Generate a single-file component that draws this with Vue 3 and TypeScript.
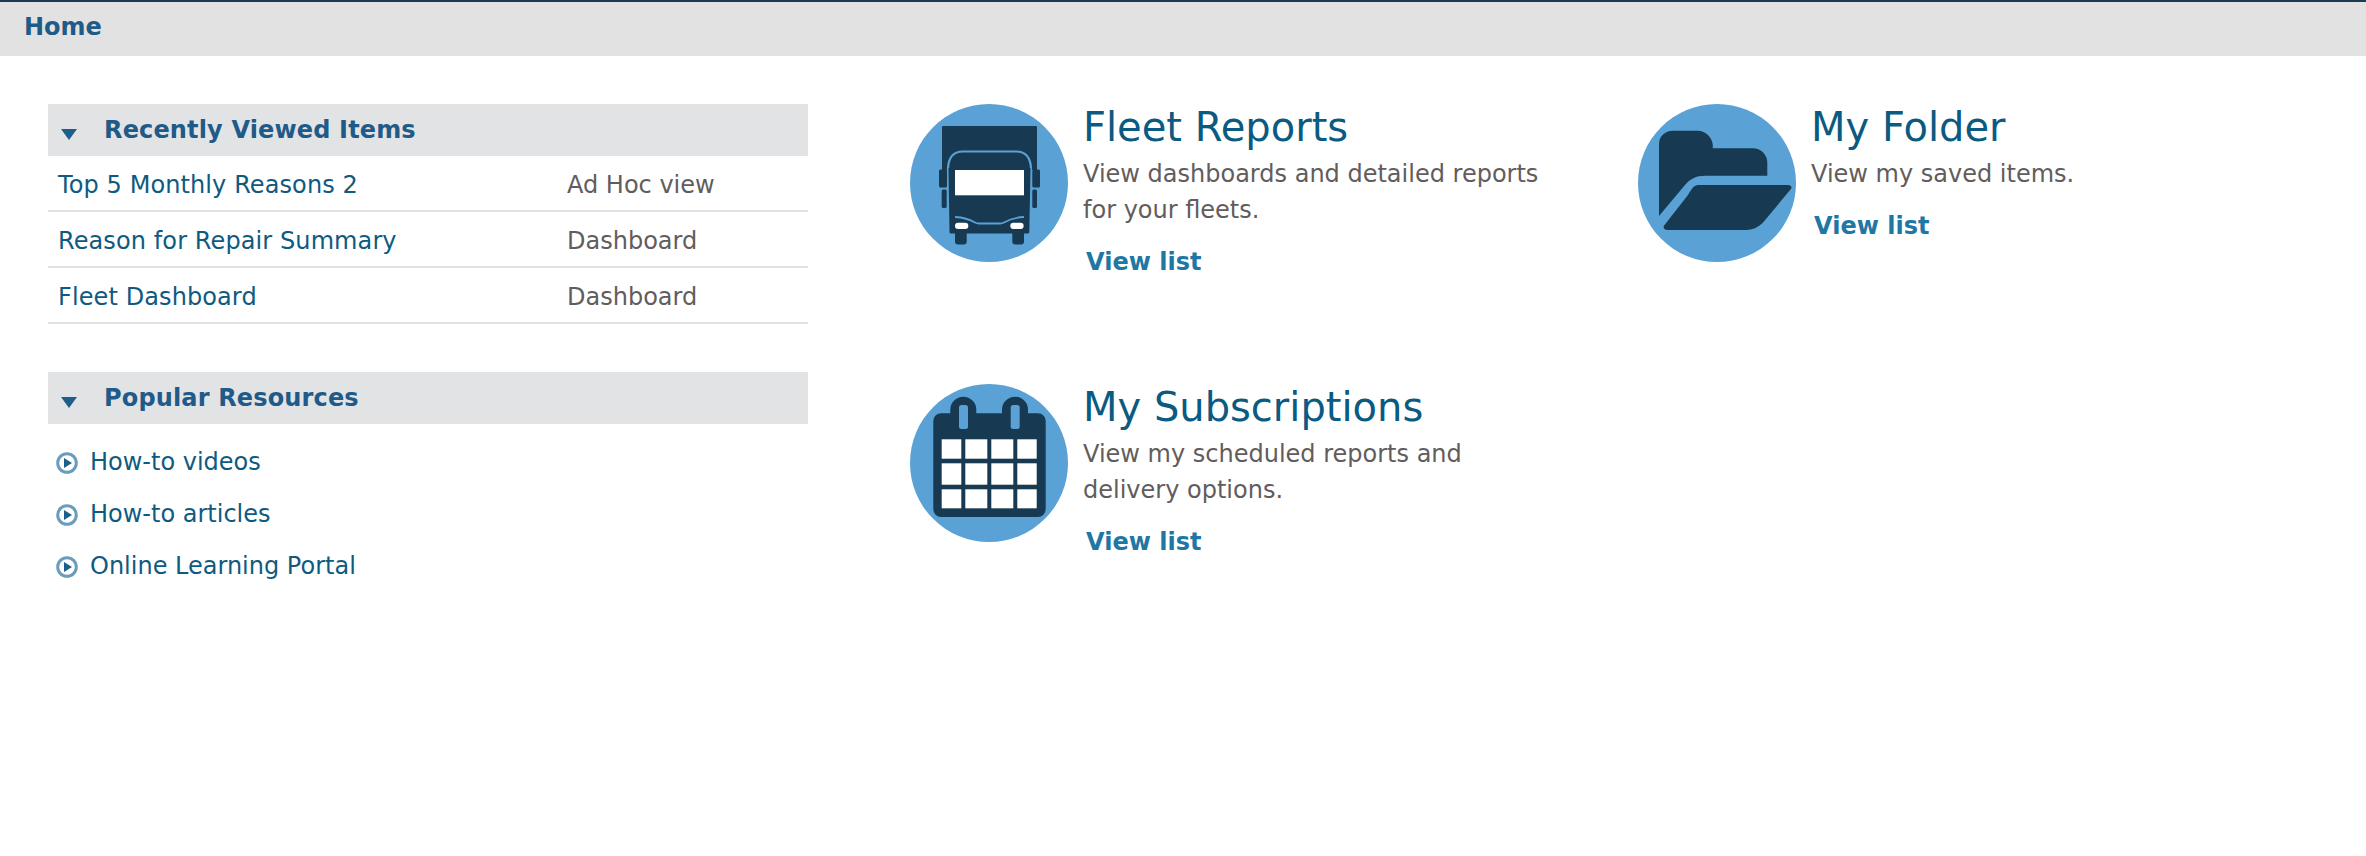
<template>
  <div class="home-page">
    <div class="title-bar">Home</div>
    <div class="content">
      <div class="left-col">
        <div class="section">
          <div class="section-head">
            <span class="arrow"></span>
            <span>Recently Viewed Items</span>
          </div>
          <div v-for="item in recentItems" :key="item.name" class="recent-row">
            <a class="recent-name">{{ item.name }}</a>
            <span class="recent-type">{{ item.type }}</span>
          </div>
        </div>
        <div class="section resources">
          <div class="section-head">
            <span class="arrow"></span>
            <span>Popular Resources</span>
          </div>
          <ul class="resource-list">
            <li v-for="res in resources" :key="res">
              <svg class="play" viewBox="0 0 22 22">
                <circle cx="11" cy="11" r="9.3" fill="#fff" stroke="#6a9dbb" stroke-width="3" />
                <path d="M8 6 16 11 8 16Z" fill="#1c5f8a" />
              </svg>
              <a>{{ res }}</a>
            </li>
          </ul>
        </div>
      </div>

      <div class="tiles">
        <div class="tile">
          <svg class="tile-icon" viewBox="0 0 158 158">
            <circle cx="79" cy="79" r="79" fill="#5aa1d5" />
            <path d="M33 22H126a1 1 0 0 1 1 1V66H32V23a1 1 0 0 1 1-1Z" fill="#173a52" />
            <path d="M38 66C38 54 43 47.500 53 47.500H106C116 47.500 121 54 121 66" fill="#173a52" stroke="#5aa1d5" stroke-width="2.200" />
            <path d="M38.500 64H120.500L119.300 128a1.500 1.500 0 0 1-1.500 1.500H41a1.500 1.500 0 0 1-1.500-1.500Z" fill="#173a52" />
            <rect x="29" y="65.500" width="8" height="18" rx="1.500" fill="#173a52" />
            <rect x="31.700" y="85.500" width="5" height="18.500" rx="1.500" fill="#173a52" />
            <rect x="122.300" y="65.500" width="7.700" height="18" rx="1.500" fill="#173a52" />
            <rect x="122.300" y="85.500" width="4.700" height="18.500" rx="1.500" fill="#173a52" />
            <rect x="45" y="66" width="69" height="25.300" fill="#fff" />
            <path d="M45 113C54 113.500 60 115.500 65 118.500Q66.500 119.500 69 119.500H90Q92.500 119.500 94 118.500C99 115.500 105 113.500 114 113" fill="none" stroke="#5aa1d5" stroke-width="1.800" />
            <rect x="45" y="118.700" width="13.300" height="6.300" rx="3" fill="#fff" />
            <rect x="100.300" y="118.700" width="13.300" height="6.300" rx="3" fill="#fff" />
            <path d="M45 129H56.700V137.500a3 3 0 0 1-3 3H48a3 3 0 0 1-3-3Z" fill="#173a52" />
            <path d="M102.300 129H114V137.500a3 3 0 0 1-3 3H105.300a3 3 0 0 1-3-3Z" fill="#173a52" />
          </svg>
          <div class="tile-body">
            <h2>Fleet Reports</h2>
            <p>View dashboards and detailed reports<br />for your fleets.</p>
            <a class="view-list">View list</a>
          </div>
        </div>

        <div class="tile">
          <svg class="tile-icon" viewBox="0 0 158 158">
            <circle cx="79" cy="79" r="79" fill="#5aa1d5" />
            <path d="M21 40A13.500 13.500 0 0 1 34.500 26.700H59A15.500 15.500 0 0 1 74.700 44.300H115A14.500 14.500 0 0 1 129.300 58V71.700H67C58 71.700 52 75 47 81L21 112Z" fill="#173a52" />
            <path d="M60.300 81H150C153 81 154.500 83 152.700 85.300L128 115C122 122.500 116 126 108 126H30C26 126 24.500 123.500 26.500 121L50 91C53.500 85 56 81 60.300 81Z" fill="#173a52" />
          </svg>
          <div class="tile-body">
            <h2>My Folder</h2>
            <p>View my saved items.</p>
            <a class="view-list">View list</a>
          </div>
        </div>

        <div class="tile">
          <svg class="tile-icon" viewBox="0 0 158 158">
            <circle cx="79" cy="79" r="79" fill="#5aa1d5" />
            <path d="M40.300 29.300V25.700a13 13 0 0 1 26 0V29.300H92V25.700a13 13 0 0 1 26 0V29.300H128a7.700 7.700 0 0 1 7.700 7.700V125.300a7.700 7.700 0 0 1-7.700 7.700H31a7.700 7.700 0 0 1-7.700-7.700V37a7.700 7.700 0 0 1 7.700-7.700Z" fill="#173a52" />
            <rect x="49" y="21" width="9" height="24" rx="2.500" fill="#5aa1d5" />
            <rect x="100.700" y="21" width="9" height="24" rx="2.500" fill="#5aa1d5" />
            <template v-for="row in calRows" :key="row.y">
              <rect v-for="col in calCols" :key="col.x" :x="col.x" :y="row.y" :width="col.w" :height="row.h" fill="#fff" />
            </template>
          </svg>
          <div class="tile-body">
            <h2>My Subscriptions</h2>
            <p>View my scheduled reports and<br />delivery options.</p>
            <a class="view-list">View list</a>
          </div>
        </div>
      </div>
    </div>
  </div>
</template>

<script setup lang="ts">
interface RecentItem {
  name: string
  type: string
}

const recentItems: RecentItem[] = [
  { name: 'Top 5 Monthly Reasons 2', type: 'Ad Hoc view' },
  { name: 'Reason for Repair Summary', type: 'Dashboard' },
  { name: 'Fleet Dashboard', type: 'Dashboard' }
]

const resources = ['How-to videos', 'How-to articles', 'Online Learning Portal']

// calendar grid cells
const calCols = [
  { x: 31.7, w: 19.6 },
  { x: 55.3, w: 22 },
  { x: 81.3, w: 22 },
  { x: 107.3, w: 19.4 }
]
const calRows = [
  { y: 55.3, h: 19.4 },
  { y: 79.3, h: 21.4 },
  { y: 105.3, h: 19 }
]
</script>

<style>
html,
body {
  margin: 0;
  background: #fff;
}
</style>

<style scoped>
.home-page {
  width: 2366px;
  height: 856px;
  overflow: hidden;
  font-family: "DejaVu Sans", Verdana, sans-serif;
  font-size: 24px;
  background: #fff;
}

.title-bar {
  box-sizing: border-box;
  height: 56px;
  line-height: 50px;
  padding-left: 24px;
  border-top: 2px solid #1a3c55;
  background: #e2e2e2;
  color: #1f5a88;
  font-weight: bold;
}

.content {
  display: flex;
  padding: 48px 0 0 48px;
}

.left-col {
  width: 760px;
  flex: none;
}

.section-head {
  display: flex;
  align-items: center;
  height: 52px;
  background: #e2e3e5;
  color: #1f5a88;
  font-weight: bold;
  letter-spacing: 0.15px;
}

.arrow {
  width: 0;
  height: 0;
  margin: 8px 27px 0 13px;
  border-left: 8px solid transparent;
  border-right: 8px solid transparent;
  border-top: 11px solid #1c5f8a;
}

.recent-row {
  display: flex;
  align-items: center;
  box-sizing: border-box;
  height: 56px;
  padding: 3px 0 0 10px;
  border-bottom: 2px solid #e2e2e2;
}

.recent-name {
  width: 509px;
  color: #0f5a80;
  letter-spacing: 0.1px;
}

.recent-type {
  color: #625c5c;
}

.resources {
  margin-top: 48px;
}

.resource-list {
  list-style: none;
  margin: 12px 0 0;
  padding: 0 0 0 8px;
}

.resource-list li {
  display: flex;
  align-items: center;
  height: 52px;
  color: #0f5a80;
}

.play {
  width: 22px;
  height: 22px;
  margin: 2px 12px 0 0;
}

.tiles {
  display: grid;
  grid-template-columns: 728px 728px;
  grid-auto-rows: 280px;
  margin-left: 102px;
}

.tile {
  display: flex;
  align-items: flex-start;
}

.tile-icon {
  width: 158px;
  height: 158px;
  flex: none;
}

.tile-body {
  margin-left: 15px;
}

.tile-body h2 {
  margin: 0;
  font-size: 40px;
  font-weight: normal;
  line-height: 46px;
  color: #0a5a82;
}

.tile-body p {
  margin: 6px 0 0;
  line-height: 36px;
  color: #625c5c;
}

.view-list {
  display: block;
  margin: 16px 0 0 3px;
  line-height: 36px;
  color: #1f77a3;
  font-weight: bold;
}
</style>
